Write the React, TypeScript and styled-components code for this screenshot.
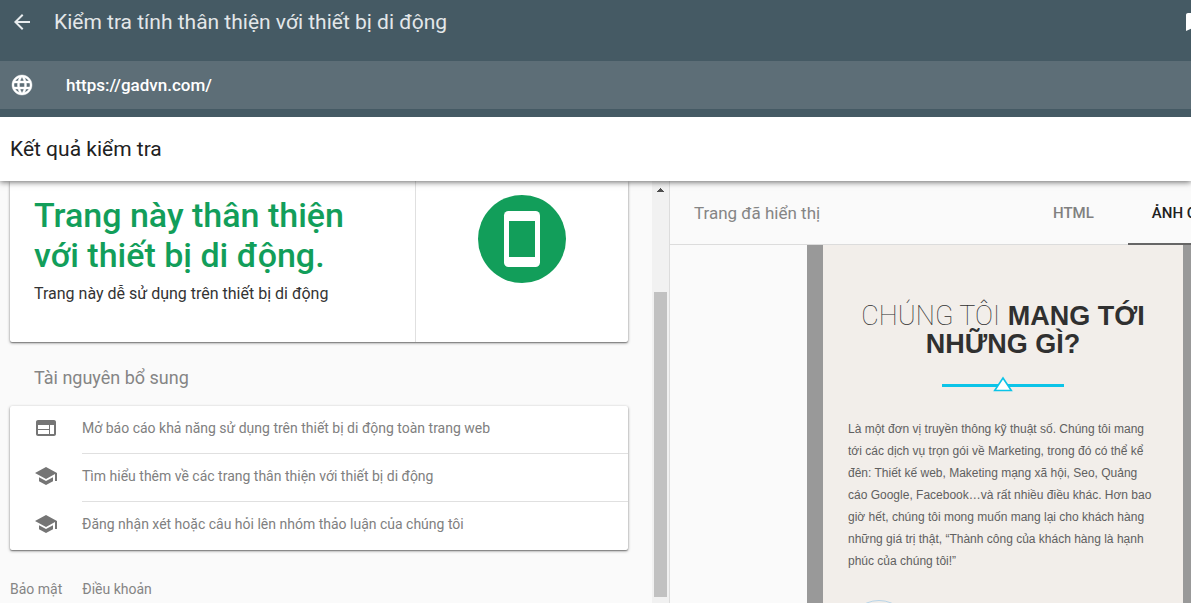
import React from "react";
import styled, { createGlobalStyle } from "styled-components";
import { MdArrowBack, MdBookmark, MdLanguage, MdSchool, MdWeb } from "react-icons/md";

const GlobalStyle = createGlobalStyle`
  *, *::before, *::after { box-sizing: border-box; }
  body { margin: 0; background: #fafafa; font-family: Roboto, sans-serif; color: #212121; }
  h1, h2, h3, p, ul { margin: 0; padding: 0; font-weight: 400; }
  button, input { font: inherit; border: 0; margin: 0; background: none; }
`;

const Page = styled.div`
  display: flex;
  flex-direction: column;
  height: 100vh;
  overflow: hidden;
`;

const TopBar = styled.header`
  flex: none;
  position: relative;
  z-index: 2;
  padding-bottom: 8px;
  background: #455a64;
  color: #fff;
`;

const TitleRow = styled.div`
  display: flex;
  align-items: flex-start;
  height: 61px;
  padding: 10px 0 0 10px;
  overflow: hidden;
`;

const IconButton = styled.button`
  flex: none;
  display: flex;
  padding: 0;
  color: inherit;
`;

const AppTitle = styled.h1`
  flex: 1;
  margin-left: 20px;
  font-size: 21px;
  font-weight: 400;
  line-height: 24px;
  color: #e3e7e9;
`;

const BookmarkButton = styled(IconButton)`
  margin-right: -14px;
`;

const UrlBar = styled.label`
  display: flex;
  align-items: center;
  gap: 32px;
  height: 48px;
  padding: 0 10px;
  background: #5d6e77;
`;

const GlobeIcon = styled(MdLanguage)`
  path {
    stroke-width: 0.4px;
  }
  path[fill="none"] {
    stroke: none;
  }
`;

const UrlInput = styled.input`
  flex: 1;
  min-width: 0;
  padding: 0;
  font-size: 17px;
  font-weight: 500;
  line-height: 24px;
  color: #fff;
  outline: none;
`;

const ResultBar = styled.div`
  flex: none;
  display: flex;
  align-items: center;
  height: 64px;
  padding: 0 10px;
  background: #fff;
  box-shadow: 0 1px 6px rgba(0, 0, 0, 0.6);
  z-index: 1;
`;

const ResultTitle = styled.h2`
  font-size: 21px;
  line-height: 24px;
`;

const Main = styled.main`
  flex: 1;
  min-height: 0;
  display: grid;
  grid-template-columns: minmax(0, 670fr) minmax(0, 521fr);
`;

const LeftPane = styled.section`
  display: flex;
  min-width: 0;
  min-height: 0;
  border-right: 1px solid #dcdcdc;
`;

const LeftContent = styled.div`
  flex: 1;
  min-width: 0;
  padding: 0 24px 0 10px;
`;

const ScrollTrack = styled.div`
  flex: none;
  display: flex;
  flex-direction: column;
  align-items: center;
  width: 17px;
  padding: 7px 2px 6px;
  background: #f1f1f1;
`;

const ScrollThumb = styled.div`
  flex: 1;
  width: 13px;
  margin-top: 100px;
  background: #c1c1c1;
`;

const Card = styled.div`
  background: #fff;
  border-radius: 2px;
  box-shadow: 0 1px 3px rgba(0, 0, 0, 0.45), 0 1px 1px rgba(0, 0, 0, 0.25);
`;

const VerdictCard = styled(Card)`
  display: flex;
  height: 161px;
  border-radius: 0 0 2px 2px;
`;

const VerdictText = styled.div`
  flex: 1;
  padding: 14px 24px;
`;

const VerdictTitle = styled.h2`
  font-size: 34px;
  font-weight: 500;
  line-height: 40px;
  color: #129e5a;
`;

const VerdictNote = styled.p`
  margin-top: 7px;
  font-size: 16px;
  line-height: 24px;
  color: #333;
`;

const VerdictFigure = styled.div`
  display: flex;
  justify-content: center;
  width: 213px;
  padding-top: 14px;
  border-left: 1px solid #e0e0e0;
`;

const SectionTitle = styled.h3`
  padding: 24px 24px 16px;
  font-size: 18px;
  line-height: 24px;
  color: #858585;
`;

const ResourceCard = styled(Card)`
  list-style: none;
`;

const ResourceLink = styled.a`
  display: flex;
  gap: 24px;
  padding-left: 24px;
  color: #808080;
  font-size: 14px;
  line-height: 20px;
  text-decoration: none;

  svg {
    flex: none;
    margin-top: 10px;
    color: #757575;
  }
`;

const ResourceLabel = styled.span<{ $last?: boolean }>`
  flex: 1;
  height: 48px;
  padding: 12px 0;
  border-bottom: ${(p) => (p.$last ? "0" : "1px solid #e0e0e0")};
`;

const Footer = styled.footer`
  display: flex;
  gap: 20px;
  padding-top: 29px;
`;

const FooterLink = styled.a`
  font-size: 14px;
  line-height: 20px;
  color: #858585;
  text-decoration: none;
`;

const RightPane = styled.section`
  display: flex;
  flex-direction: column;
  min-width: 0;
  min-height: 0;
  overflow: hidden;
`;

const PreviewBar = styled.div`
  flex: none;
  display: flex;
  height: 64px;
  border-bottom: 1px solid #dcdcdc;
`;

const PreviewTitle = styled.h3`
  flex: none;
  width: 359px;
  padding: 20px 24px;
  font-size: 17px;
  line-height: 24px;
  color: #858585;
`;

const Tabs = styled.div`
  flex: none;
  display: flex;
  gap: 10px;
`;

const Tab = styled.button<{ $active?: boolean }>`
  height: 64px;
  padding: 2px 24px 0;
  border-bottom: 2px solid ${(p) => (p.$active ? "#666" : "transparent")};
  font-size: 15px;
  font-weight: 500;
  color: ${(p) => (p.$active ? "#212121" : "#808080")};
  white-space: nowrap;
`;

const PreviewArea = styled.div`
  flex: 1;
  min-height: 0;
  display: flex;
  padding-left: 137px;
  overflow: hidden;
`;

const DeviceFrame = styled.div`
  flex: none;
  width: 392px;
  border: solid #999;
  border-width: 0 16px;
  padding: 57px 24px 0;
  background: #f2eeea;
  display: flex;
  flex-direction: column;
  align-items: center;
`;

const SiteTitle = styled.h2`
  font-family: "Liberation Sans", Arial, sans-serif;
  font-size: 27px;
  font-weight: 700;
  line-height: 28px;
  text-align: center;
  color: #303030;
  white-space: nowrap;
`;

const ThinText = styled.span`
  font-family: Roboto, sans-serif;
  font-weight: 100;
`;

const Rule = styled.svg`
  flex: none;
  margin-top: 18px;
`;

const SiteText = styled.p`
  width: 100%;
  margin: 26px 0 28px;
  padding-left: 1px;
  font-family: "Liberation Sans", Arial, sans-serif;
  font-size: 12px;
  line-height: 22px;
  color: #606060;
  white-space: nowrap;
`;

const Badge = styled.div`
  flex: none;
  align-self: flex-start;
  width: 64px;
  height: 64px;
  border: 1px solid #b9d5e8;
  border-radius: 50%;
`;

const resources = [
  { icon: MdWeb, label: "Mở báo cáo khả năng sử dụng trên thiết bị di động toàn trang web" },
  { icon: MdSchool, label: "Tìm hiểu thêm về các trang thân thiện với thiết bị di động" },
  { icon: MdSchool, label: "Đăng nhận xét hoặc câu hỏi lên nhóm thảo luận của chúng tôi" },
];

const siteLines = [
  "Là một đơn vị truyền thông kỹ thuật số. Chúng tôi mang",
  "tới các dịch vụ trọn gói về Marketing, trong đó có thể kể",
  "đên: Thiết kế web, Maketing mạng xã hội, Seo, Quảng",
  "cáo Google, Facebook…và rất nhiều điều khác. Hơn bao",
  "giờ hết, chúng tôi mong muốn mang lại cho khách hàng",
  "những giá trị thật, “Thành công của khách hàng là hạnh",
  "phúc của chúng tôi!”",
];

const PhoneBadge = () => (
  <svg width="88" height="88" viewBox="0 0 88 88" aria-hidden="true">
    <circle cx="44" cy="44" r="44" fill="#129e5a" />
    <rect x="26" y="16" width="36" height="56" rx="4.5" fill="#fff" />
    <rect x="31" y="26" width="26" height="36" fill="#129e5a" />
  </svg>
);

const ScrollArrow = () => (
  <svg width="7" height="4" viewBox="0 0 7 4" shapeRendering="crispEdges" aria-hidden="true">
    <path d="M3 0h1v1h1v1h1v1h1v1H0V3h1V2h1V1h1z" fill="#505050" />
  </svg>
);

const TriangleRule = () => (
  <Rule width="122" height="16" viewBox="0 0 122 16" aria-hidden="true">
    <rect y="8" width="122" height="3" fill="#0cc4e8" />
    <path d="M61 2L69.300 14.500H52.700z" fill="#fff" stroke="#0cc4e8" strokeWidth="1.600" />
  </Rule>
);

export default function App() {
  return (
    <Page>
      <GlobalStyle />
      <TopBar>
        <TitleRow>
          <IconButton aria-label="Quay lại">
            <MdArrowBack size={24} color="#e8ecee" />
          </IconButton>
          <AppTitle>Kiểm tra tính thân thiện với thiết bị di động</AppTitle>
          <BookmarkButton aria-label="Dấu trang">
            <MdBookmark size={24} />
          </BookmarkButton>
        </TitleRow>
        <UrlBar>
          <GlobeIcon size={24} aria-hidden="true" />
          <UrlInput type="text" aria-label="URL" defaultValue="https://gadvn.com/" />
        </UrlBar>
      </TopBar>
      <ResultBar>
        <ResultTitle>Kết quả kiểm tra</ResultTitle>
      </ResultBar>
      <Main>
        <LeftPane>
          <LeftContent>
            <VerdictCard>
              <VerdictText>
                <VerdictTitle>
                  Trang này thân thiện
                  <br />
                  với thiết bị di động.
                </VerdictTitle>
                <VerdictNote>Trang này dễ sử dụng trên thiết bị di động</VerdictNote>
              </VerdictText>
              <VerdictFigure>
                <PhoneBadge />
              </VerdictFigure>
            </VerdictCard>
            <SectionTitle>Tài nguyên bổ sung</SectionTitle>
            <ResourceCard as="ul">
              {resources.map(({ icon: Icon, label }, i) => (
                <li key={label}>
                  <ResourceLink href="#">
                    <Icon size={24} aria-hidden="true" />
                    <ResourceLabel $last={i === resources.length - 1}>{label}</ResourceLabel>
                  </ResourceLink>
                </li>
              ))}
            </ResourceCard>
            <Footer>
              <FooterLink href="#">Bảo mật</FooterLink>
              <FooterLink href="#">Điều khoản</FooterLink>
            </Footer>
          </LeftContent>
          <ScrollTrack>
            <ScrollArrow />
            <ScrollThumb />
          </ScrollTrack>
        </LeftPane>
        <RightPane>
          <PreviewBar>
            <PreviewTitle>Trang đã hiển thị</PreviewTitle>
            <Tabs role="tablist">
              <Tab role="tab" aria-selected="false">HTML</Tab>
              <Tab role="tab" aria-selected="true" $active>ẢNH CHỤP MÀN HÌNH</Tab>
            </Tabs>
          </PreviewBar>
          <PreviewArea>
            <DeviceFrame>
              <SiteTitle>
                <ThinText>CHÚNG TÔI</ThinText> MANG TỚI
                <br />
                NHỮNG GÌ?
              </SiteTitle>
              <TriangleRule />
              <SiteText>
                {siteLines.map((line) => (
                  <React.Fragment key={line}>
                    {line}
                    <br />
                  </React.Fragment>
                ))}
              </SiteText>
              <Badge />
            </DeviceFrame>
          </PreviewArea>
        </RightPane>
      </Main>
    </Page>
  );
}
